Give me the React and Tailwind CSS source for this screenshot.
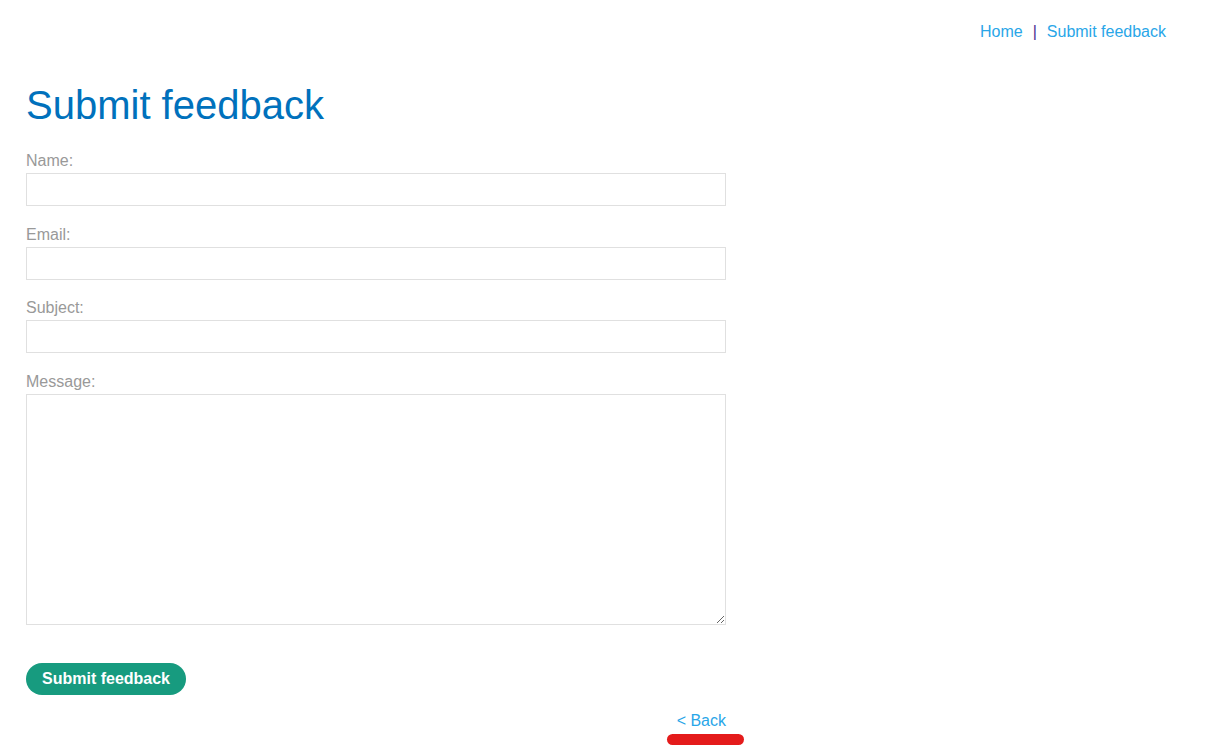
export default function App() {
  const fields = [
    { label: "Name:", type: "text", mb: "mb-[19px]" },
    { label: "Email:", type: "email", mb: "mb-[18px]" },
    { label: "Subject:", type: "text", mb: "mb-[19px]" },
  ];

  return (
    <div className="min-h-[751px] bg-white font-['Liberation_Sans',Arial,sans-serif]">
      <nav className="flex justify-end items-center gap-[10px] pt-[23px] pr-[40px] text-[16px] leading-[18px]">
        <a href="#" className="text-[#29a6e8]">Home</a>
        <span className="text-[#4b2e8f]">|</span>
        <a href="#" className="text-[#29a6e8]">Submit feedback</a>
      </nav>

      <div className="px-[26px]">
        <h1 className="mt-[41px] text-[40px] leading-[46px] text-[#0071bc]">Submit feedback</h1>

        <form className="w-[700px] mt-[23px]">
          {fields.map((f) => (
            <div key={f.label} className={f.mb}>
              <label className="block text-[16px] leading-[19px] text-[#999999] mb-[3px]">{f.label}</label>
              <input
                type={f.type}
                className="block w-full h-[33px] border border-[#e0e0e0] outline-none px-2"
              />
            </div>
          ))}
          <div>
            <label className="block text-[16px] leading-[19px] text-[#999999] mb-[3px]">Message:</label>
            <textarea className="block w-full h-[231px] border border-[#e0e0e0] outline-none p-2 resize-y" />
          </div>

          <button
            type="button"
            className="mt-[38px] h-[32px] w-[160px] rounded-full bg-[#179b7f] text-white font-bold text-[16px] flex items-center justify-center"
          >
            Submit feedback
          </button>

          <div className="flex justify-end mt-[14px]">
            <div className="relative">
              <a href="#" className="text-[#29a6e8] text-[16px] leading-[18px]">&lt; Back</a>
              <div className="absolute left-[-10px] top-[25px] w-[77px] h-[11px] rounded-full bg-[#e41b1b]" />
            </div>
          </div>
        </form>
      </div>
    </div>
  );
}
